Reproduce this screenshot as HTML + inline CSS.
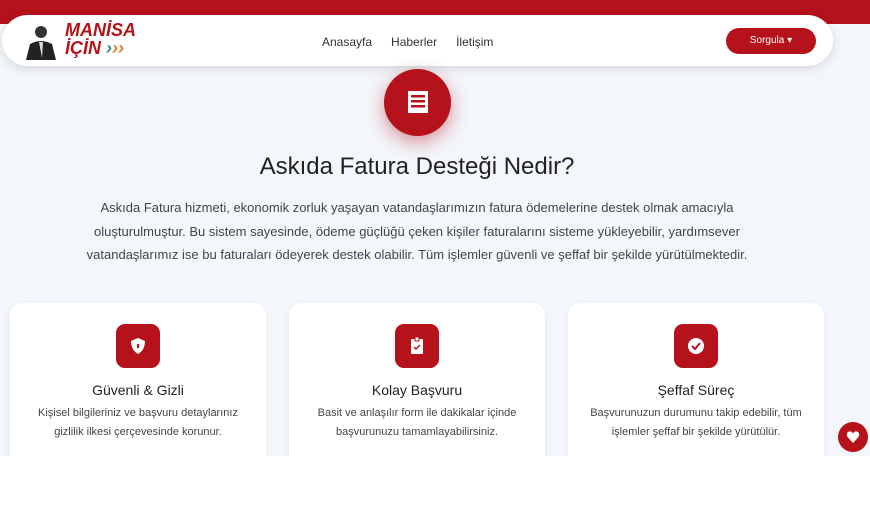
<!DOCTYPE html>
<html><head><meta charset="utf-8"><style>
*{margin:0;padding:0;box-sizing:border-box}
body{width:870px;height:516px;background:#fff;font-family:"Liberation Sans",sans-serif;position:relative;overflow:hidden}
.page{position:absolute;left:0;top:0;width:870px;height:456px;background:#f3f6fb;overflow:hidden}
.band{position:absolute;left:0;top:0;width:870px;height:24px;background:#b5121b}
.nav{position:absolute;left:2px;top:15px;width:831px;height:51px;background:#fff;border-radius:26px;box-shadow:0 3px 10px rgba(0,0,0,.12)}
.links{position:absolute;top:35px;left:322px;font-size:12px;color:#333}
.links span{margin-right:19px}
.btn{position:absolute;left:726px;top:28px;width:90px;height:26px;background:#b5121b;border-radius:13px;color:#fff;font-size:10px;text-align:center;line-height:26px}
.circ{position:absolute;left:384px;top:69px;width:67px;height:67px;border-radius:50%;background:#b5121b;box-shadow:0 6px 18px rgba(181,18,27,.45)}
h1{position:absolute;top:153px;width:834px;text-align:center;font-size:24px;font-weight:normal;color:#222}
.p{position:absolute;top:196px;left:60px;width:714px;text-align:center;font-size:13px;line-height:23.5px;color:#444}
.card{position:absolute;top:303px;width:256px;height:170px;background:#fff;border-radius:12px;box-shadow:0 2px 8px rgba(0,0,0,.05)}
.ic{position:absolute;left:106px;top:21px;width:44px;height:44px;border-radius:9px;background:#b5121b}
.ic svg{position:absolute;left:12px;top:12px}
.ct{position:absolute;top:79px;width:100%;text-align:center;font-size:14px;color:#222}
.cd{position:absolute;top:101px;width:100%;text-align:center;font-size:11px;line-height:19px;color:#444}
.heart{position:absolute;left:838px;top:422px;width:30px;height:30px;border-radius:50%;background:#b5121b}
</style></head><body>
<div class="page">
<div class="band"></div>
<div class="nav"></div>
<svg style="position:absolute;left:22px;top:22px" width="38" height="38"><circle cx="19" cy="10" r="6" fill="#333"/><path d="M4 38 L8 22 Q19 16 30 22 L34 38Z" fill="#222"/><path d="M17 20 L21 20 L20 36 Z" fill="#ddd"/></svg>
<div style="position:absolute;left:65px;top:21px;font-size:18px;font-weight:bold;font-style:italic;color:#b5121b;line-height:18px">MANİSA<br>İÇİN <span style="color:#2a8a8a">›</span><span style="color:#e07b2a">››</span></div>
<div class="links"><span>Anasayfa</span><span>Haberler</span><span>İletişim</span></div>
<div class="btn">Sorgula ▾</div>
<div class="circ"><svg style="position:absolute;left:22px;top:21px" width="24" height="24"><rect x="2" y="1" width="20" height="22" fill="#fff"/><rect x="5" y="5" width="14" height="2.5" fill="#b5121b"/><rect x="5" y="10" width="14" height="2.5" fill="#b5121b"/><rect x="5" y="15" width="14" height="2.5" fill="#b5121b"/></svg></div>
<h1>Askıda Fatura Desteği Nedir?</h1>
<div class="p">Askıda Fatura hizmeti, ekonomik zorluk yaşayan vatandaşlarımızın fatura ödemelerine destek olmak amacıyla oluşturulmuştur. Bu sistem sayesinde, ödeme güçlüğü çeken kişiler faturalarını sisteme yükleyebilir, yardımsever vatandaşlarımız ise bu faturaları ödeyerek destek olabilir. Tüm işlemler güvenli ve şeffaf bir şekilde yürütülmektedir.</div>
<div class="card" style="left:10px"><div class="ic"><svg width="20" height="20"><path d="M10 2 L17 5 Q17 14 10 18 Q3 14 3 5Z" fill="#fff"/><rect x="9" y="8" width="2" height="4" fill="#b5121b"/></svg></div><div class="ct">Güvenli &amp; Gizli</div><div class="cd">Kişisel bilgileriniz ve başvuru detaylarınız<br>gizlilik ilkesi çerçevesinde korunur.</div></div>
<div class="card" style="left:289px"><div class="ic"><svg width="20" height="20"><rect x="4" y="3" width="12" height="15" rx="1" fill="#fff"/><rect x="8" y="1" width="4" height="4" fill="#fff" stroke="#b5121b"/><path d="M7 11 L9 13 L13 9" stroke="#b5121b" stroke-width="1.5" fill="none"/></svg></div><div class="ct">Kolay Başvuru</div><div class="cd">Basit ve anlaşılır form ile dakikalar içinde<br>başvurunuzu tamamlayabilirsiniz.</div></div>
<div class="card" style="left:568px"><div class="ic"><svg width="20" height="20"><circle cx="10" cy="10" r="8" fill="#fff"/><path d="M6 10 L9 13 L14 7" stroke="#b5121b" stroke-width="2" fill="none"/></svg></div><div class="ct">Şeffaf Süreç</div><div class="cd">Başvurunuzun durumunu takip edebilir, tüm<br>işlemler şeffaf bir şekilde yürütülür.</div></div>
<div class="heart"><svg style="position:absolute;left:8px;top:8px" width="14" height="14"><path d="M7 13 L1.5 7 Q-0.5 3 3 1.5 Q5.5 1 7 3.5 Q8.5 1 11 1.5 Q14.5 3 12.5 7Z" fill="#fff"/></svg></div>
</div>
</body></html>
